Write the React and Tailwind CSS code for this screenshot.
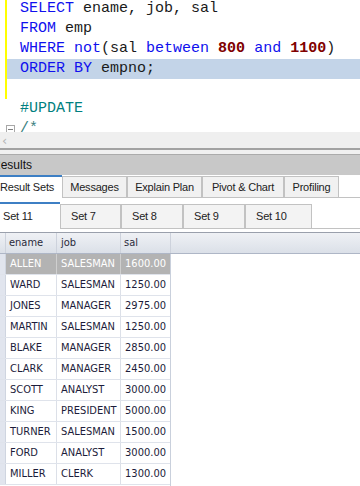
const rows = [
  ['ALLEN', 'SALESMAN', '1600.00'],
  ['WARD', 'SALESMAN', '1250.00'],
  ['JONES', 'MANAGER', '2975.00'],
  ['MARTIN', 'SALESMAN', '1250.00'],
  ['BLAKE', 'MANAGER', '2850.00'],
  ['CLARK', 'MANAGER', '2450.00'],
  ['SCOTT', 'ANALYST', '3000.00'],
  ['KING', 'PRESIDENT', '5000.00'],
  ['TURNER', 'SALESMAN', '1500.00'],
  ['FORD', 'ANALYST', '3000.00'],
  ['MILLER', 'CLERK', '1300.00'],
]

const K = ({ children }) => <span className="text-[#1010ee]">{children}</span>
const N = ({ children }) => <span className="font-bold text-[#800000]">{children}</span>

function Line({ bar, hl, fold, children }) {
  return (
    <div className={hl ? 'flex h-[20px] shrink-0 bg-[#c3d4e8]' : 'flex h-[20px] shrink-0'}>
      <div className="flex h-full w-[20px] shrink-0">
        <div className="h-full w-[5px] bg-white" />
        <div className={bar ? 'h-full w-[2px] bg-[#ffff00]' : 'h-full w-[2px]'} />
        {fold && (
          <div className="ml-[-1px] mt-[6px] flex h-[9px] w-[9px] items-center justify-center border border-[#a8a8a8] bg-white">
            <div className="h-px w-[5px] bg-[#808080]" />
          </div>
        )}
      </div>
      <div className="flex items-center">
        <span className="whitespace-pre text-[#1a1a1a]">{children}</span>
      </div>
    </div>
  )
}

function Editor() {
  return (
    <div className="h-[132px] shrink-0 overflow-hidden bg-white font-['Liberation_Mono',monospace] text-[15px]">
      <div className="-mt-px flex flex-col">
        <Line bar>
          <K>SELECT</K> ename, job, sal
        </Line>
        <Line bar>
          <K>FROM</K> emp
        </Line>
        <Line bar>
          <K>WHERE</K> <K>not</K>(sal <K>between</K> <N>800</N> <K>and</K> <N>1100</N>)
        </Line>
        <Line bar hl>
          <K>ORDER BY</K> empno;
        </Line>
        <Line bar />
        <Line>
          <span className="text-[#008080]">#UPDATE</span>
        </Line>
        <Line fold>
          <span className="text-[#3a8080]">/*</span>
        </Line>
      </div>
    </div>
  )
}

function Tab({ w, active, children }) {
  if (active) {
    return (
      <div className={`flex h-[23px] shrink-0 items-center border-t-2 border-[#3d7fc4] bg-white ${w}`}>
        {children}
      </div>
    )
  }
  return (
    <div className={`flex h-[22px] shrink-0 items-center justify-center border border-[#c2c2c2] bg-[#f1f1f1] ${w}`}>
      {children}
    </div>
  )
}

function SetTab({ w, active, children }) {
  if (active) {
    return (
      <div className={`flex h-[27px] shrink-0 items-center border-t-2 border-[#3d7fc4] bg-white pl-[3px] ${w}`}>
        {children}
      </div>
    )
  }
  return (
    <div className={`flex h-[25px] shrink-0 items-center border border-[#c2c2c2] bg-[#f3f3f3] pl-[10px] ${w}`}>
      {children}
    </div>
  )
}

export default function App() {
  return (
    <div className="flex h-[486px] w-[360px] flex-col overflow-hidden bg-white">
      <Editor />
      <div className="flex h-[16px] shrink-0 items-center bg-[#efefef] pl-[2px] font-['DejaVu_Sans',sans-serif] text-[13px] leading-none text-[#b4b4b4]">
        ‹
      </div>
      <div className="h-[2px] shrink-0 bg-[#a2a2a2]" />
      <div className="h-[4px] shrink-0 bg-[#f0f0f0]" />
      <div className="h-px shrink-0 bg-[#ababab]" />
      <div className="flex h-[20px] shrink-0 items-center bg-[#c8c8c8] font-['Liberation_Sans',sans-serif] text-[12px] text-[#111]">
        <span className="-ml-[8px]">Results</span>
      </div>

      <div className="flex h-[23px] shrink-0 items-end font-['Liberation_Sans',sans-serif] text-[11px] tracking-[-0.2px] text-[#222]">
        <Tab w="w-[62px]" active>
          Result Sets
        </Tab>
        <Tab w="w-[65px]">Messages</Tab>
        <Tab w="w-[75px]">Explain Plan</Tab>
        <Tab w="w-[82px]">Pivot &amp; Chart</Tab>
        <Tab w="w-[55px]">Profiling</Tab>
        <div className="h-full flex-1 border-b border-[#c2c2c2]" />
      </div>

      <div className="h-[4px] shrink-0" />

      <div className="flex h-[27px] shrink-0 items-end font-['Liberation_Sans',sans-serif] text-[11px] tracking-[-0.2px] text-[#222]">
        <SetTab w="w-[60px]" active>
          Set 11
        </SetTab>
        <SetTab w="w-[61px]">Set 7</SetTab>
        <SetTab w="w-[62px]">Set 8</SetTab>
        <SetTab w="w-[62px]">Set 9</SetTab>
        <SetTab w="w-[67px]">Set 10</SetTab>
        <div className="h-full flex-1 border-b border-[#c2c2c2]" />
      </div>

      <div className="h-[3px] shrink-0" />

      <div className="flex flex-1 flex-col font-['DejaVu_Sans_Condensed','DejaVu_Sans',sans-serif] text-[11px] [font-stretch:condensed]">
        <div className="flex h-[22px] shrink-0 border-y border-t-[#9aa0ac] border-b-[#aeb6c6] bg-linear-to-b from-[#eff1f5] to-[#dbe0e8] text-[#2a2a3a]">
          <div className="w-[6px] shrink-0 border-r border-[#cdd2dc]" />
          <div className="flex w-[51px] shrink-0 items-center border-r border-[#cdd2dc] pl-[3px]">ename</div>
          <div className="flex w-[64px] shrink-0 items-center border-r border-[#cdd2dc] pl-[4px]">job</div>
          <div className="flex w-[50px] shrink-0 items-center border-r border-[#cdd2dc] pl-[3px]">sal</div>
          <div className="flex-1" />
        </div>
        <div className="flex flex-1">
          <div className="flex w-[171px] shrink-0 flex-col border-r border-[#c9d0dc]">
            {rows.map((r, i) => {
              const sel = i === 0
              const cell = sel
                ? 'flex h-full shrink-0 items-center border-r border-[#cfcfcf] bg-[#b3b3b3] text-white'
                : 'flex h-full shrink-0 items-center border-r border-[#dce0e8] text-[#1c1c3a]'
              return (
                <div key={i} className="flex h-[21px] shrink-0 border-b border-[#dfe3eb]">
                  <div className="h-full w-[6px] shrink-0 border-r border-[#cfd5e0] bg-[#e1e5ee]" />
                  <div className={`${cell} w-[51px] pl-[4px]`}>{r[0]}</div>
                  <div className={`${cell} w-[64px] pl-[4px]`}>{r[1]}</div>
                  <div className={`${cell} w-[49px] justify-end border-r-0 pr-[4px]`}>{r[2]}</div>
                </div>
              )
            })}
          </div>
          <div className="flex-1 bg-white" />
        </div>
      </div>
    </div>
  )
}
